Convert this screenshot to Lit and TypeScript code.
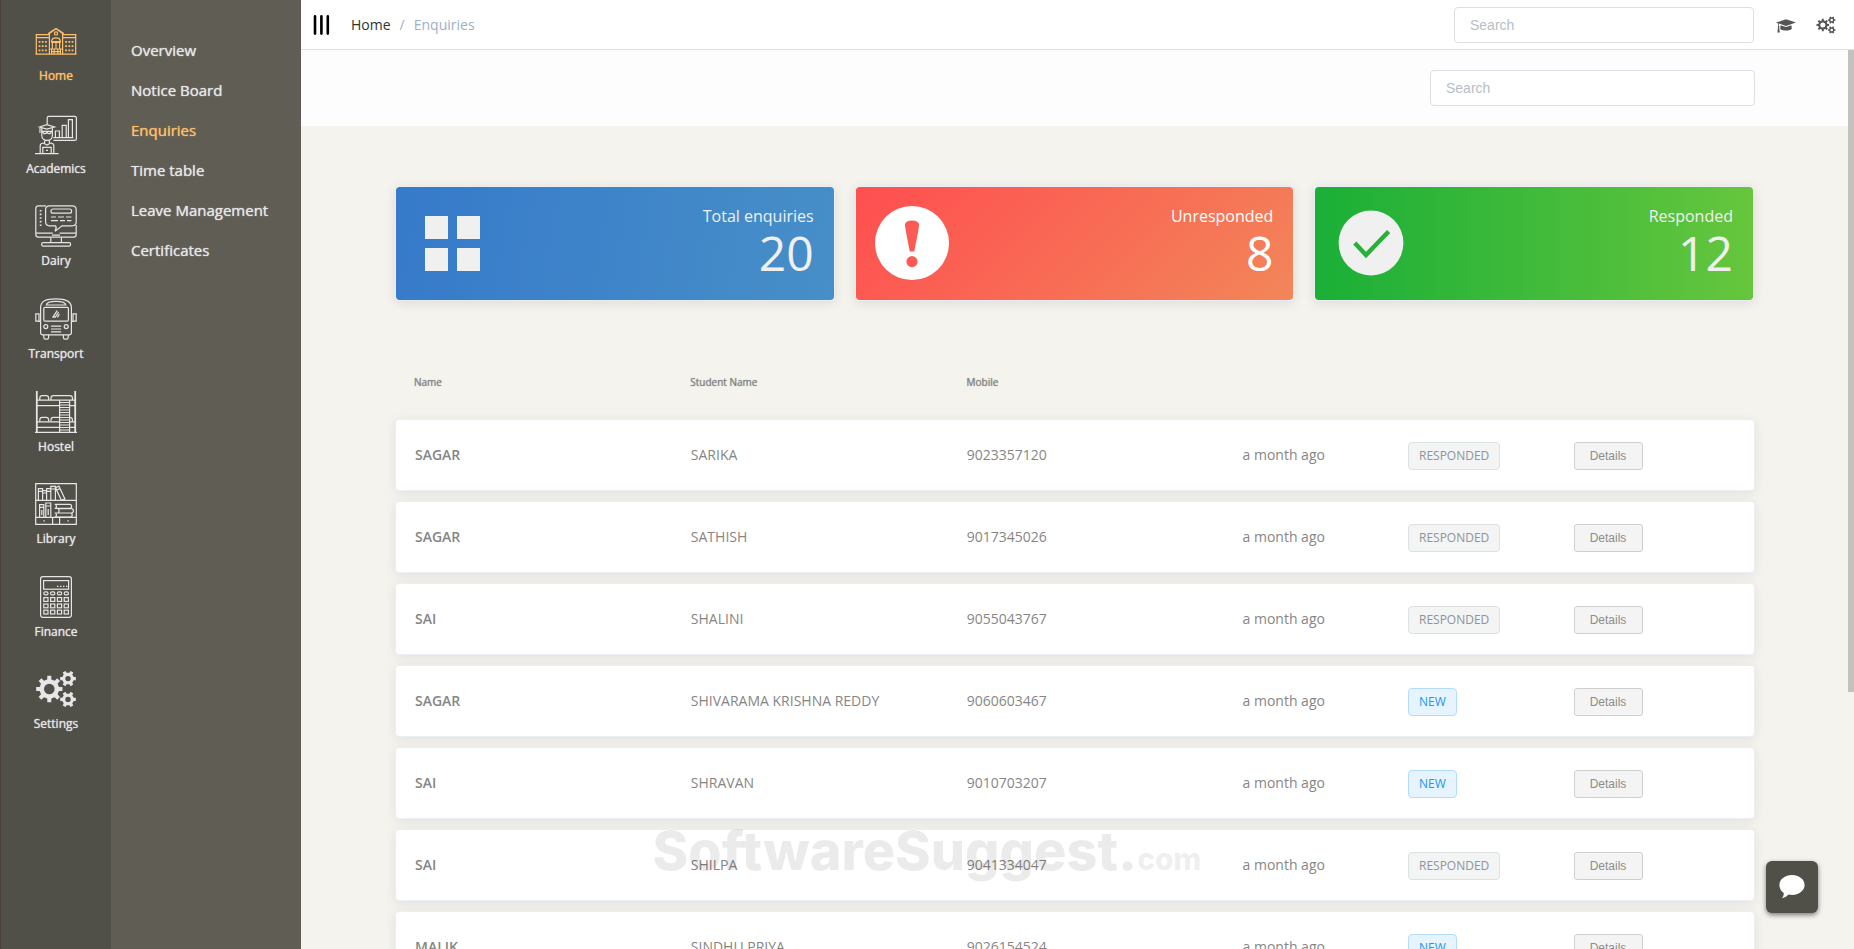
import { LitElement, html, svg, css, SVGTemplateResult } from 'lit';
import { customElement, state } from 'lit/decorators.js';
import { classMap } from 'lit/directives/class-map.js';

interface Enquiry {
  name: string;
  student: string;
  mobile: string;
  when: string;
  responded: boolean;
}

const row = (name: string, student: string, mobile: string, responded: boolean): Enquiry => ({
  name,
  student,
  mobile,
  when: 'a month ago',
  responded,
});

const enquiries: Enquiry[] = [
  row('SAGAR', 'SARIKA', '9023357120', true),
  row('SAGAR', 'SATHISH', '9017345026', true),
  row('SAI', 'SHALINI', '9055043767', true),
  row('SAGAR', 'SHIVARAMA KRISHNA REDDY', '9060603467', false),
  row('SAI', 'SHRAVAN', '9010703207', false),
  row('SAI', 'SHILPA', '9041334047', true),
  row('MALIK', 'SINDHU PRIYA', '9026154524', false),
];

// outline of a cog wheel with a round hole
const gear = (cx: number, cy: number, r: number, teeth: number, hole: number) => {
  const step = (Math.PI * 2) / teeth;
  const inner = r * 0.74;
  const points: string[] = [];
  const add = (radius: number, angle: number) =>
    points.push(
      `${(cx + radius * Math.cos(angle)).toFixed(2)} ${(cy + radius * Math.sin(angle)).toFixed(2)}`
    );
  for (let i = 0; i < teeth; i++) {
    const a = i * step;
    add(inner, a - step * 0.27);
    add(r, a - step * 0.19);
    add(r, a + step * 0.19);
    add(inner, a + step * 0.27);
  }
  return `M${points.join('L')}Z M${cx - hole} ${cy}a${hole} ${hole} 0 1 0 ${hole * 2} 0a${hole} ${hole} 0 1 0 ${-hole * 2} 0Z`;
};

const gearsPath = [
  gear(14.3, 21, 13.3, 8, 5.3),
  gear(33, 10.6, 8, 6, 2.7),
  gear(33, 31.4, 8, 6, 2.7),
].join(' ');

const gears = svg`<path fill="currentColor" stroke="none" fill-rule="evenodd" d=${gearsPath} />`;

const rungs = [11.5, 14, 16.5, 19, 21.5, 24, 26.5, 29, 31.5, 34, 36.5, 39]
  .map((y) => `M25 ${y}h9.5`)
  .join('');

const keys = [8.8, 15.6, 22.4, 29.2];

const icons: Record<string, SVGTemplateResult> = {
  home: svg`
    <path d="M.6 14.6h13.6M27.8 14.6h13.6M1.3 14.6v19.6M40.7 14.6v19.6M1 17.6h13M28 17.6h13M.4 34.2h41.2" />
    <path d="M14.4 34V13.4L21 8.8l6.6 4.6V34M13.2 13.6L21 8.4l7.8 5.2" />
    <circle cx="21" cy="13.4" r="1.6" />
    <path d="M16.6 21.6c0-5 8.8-5 8.8 0zM16.2 22.4h9.6M17.4 22.4v6M21 22.4v6M24.6 22.4v6M14.4 29h13.2M16.6 34v-5M25.4 34v-5M19.2 34v-5M22.8 34v-5M16 31.6h10" />
    <path stroke-width="1.8" stroke-dasharray="1.8 2.4" d="M4.5 21v12M7.7 21v12M10.9 21v12M31.1 21v12M34.3 21v12M37.5 21v12" />`,
  academics: svg`
    <path d="M12.2 11V5q0-1.6 1.6-1.6h26q1.6 0 1.6 1.6v21q0 1.4-1.6 1.4H18.4M18.4 24.6h20" />
    <path d="M20.4 24.6V18h4v6.6M27.2 24.6V12.4h4v12.2M33.4 24.6v-18h4v18" />
    <path d="M4.4 14l7.4-2.4 7.8 2.4-7.8 2.2zM6.8 15v7.6c0 6.4 10.6 6.4 10.6 0V15M5 15v5M6.8 18.4h10.6M8 18.4c0 3 3.4 3 4 .4.6 2.6 4 2.6 4-.4M9.6 27v3.2M14.4 27v3.2" />
    <path d="M5.2 40.4v-7.6q0-2.4 3-2.8l3.8 2 3.8-2q3 .4 3 2.8v7.6M7.8 40.4v-6h8.4v6M0 40.6h23.6M11 37.4h2" />`,
  dairy: svg`
    <path d="M11 .8H3.4Q.8.8.8 3.4v26.2q0 2.6 2.6 2.6h35.2q2.6 0 2.6-2.6V20M.8 28.2h17M24.6 28.2h16.6" />
    <path d="M14.6.8h22.6q4 0 4 4v12q0 4-4 4H27l-7 5.6q2-3 .6-5.6h-6q-4 0-4-4v-12q0-4 4-4z" />
    <rect x="16" y="4" width="20.6" height="4.2" rx="2" />
    <path d="M16 12h5M23 12h6M31 12h5.4M16 15.6h7M25 15.6h5M32 15.6h4.4M17 30.2h8" />
    <path stroke-width="1.8" stroke-dasharray="1.6 2" d="M5.6 5v17" />
    <path d="M15.8 32.4v5.2M26.4 32.4v5.2" />
    <rect x="6.6" y="37.6" width="29" height="3.6" rx="1.6" />`,
  transport: svg`
    <path d="M5.6 34.6V9.4C5.6 3 11 .8 21 .8s15.4 2.2 15.4 8.6v25.2q0 2.2-2.2 2.2H7.8q-2.2 0-2.2-2.2z" />
    <path d="M11.4 7q.4-3.6 9.6-3.6T30.8 7z" />
    <rect x="8.8" y="9.4" width="24.6" height="13.8" rx="1.2" />
    <circle cx="10.8" cy="28.6" r="2" /><circle cx="31.2" cy="28.6" r="2" />
    <path d="M16 28.2h10.2M16 31h10.2M16 33.8h10.2M17.6 19.6l4.6-7M20 19.6l3.6-5.6M22.4 19.4l2-3.4M17.8 19.2h3" />
    <path d="M5.4 23.4H4v-7.6H.8v7.4H4M36.6 23.4H38v-7.6h3.2v7.4H38M8.8 37v2.6q0 1.6 1.6 1.6h1.6q1.6 0 1.6-1.6V37M28.4 37v2.6q0 1.6 1.6 1.6h1.6q1.6 0 1.6-1.6V37" />`,
  hostel: svg`
    <path stroke-width="1.8" d="M1.8 0v41M40.2 0v41" />
    <path d="M0 41.3h42M2 9.2h38M2 14.6h22.6M34.6 14.6H40M2 30.8h22.6M34.6 30.8H40M2 36.4h22.6M34.6 36.4H40" />
    <path d="M4.8 9V7q0-2.4 2.4-2.4h4q2.4 0 2.4 2.4v2M16 9V7q0-2.4 2.4-2.4H35q2.4 0 2.4 2.4v2M4.8 30.6v-1.8q0-2.4 2.4-2.4h4q2.4 0 2.4 2.4v1.8M16 30.6v-1.8q0-2.4 2.4-2.4h6M34.6 26.4q2.8 0 2.8 2.4v1.8" />
    <path d="M24.6 9.2V41M34.6 9.2V41${rungs}" />`,
  library: svg`
    <path d="M.7.7h40.6v40.6H.7zM.7 17.3h40.6M.7 34.4h40.6M17.6 34.4v7M24.6 34.4v7M8.4 37.8h1.4M32.4 37.8h1.4" />
    <path d="M3.4 17V5.6h4.2V17M7.6 7.6h4V17M11.6 17V5.6h4.2V17M3.4 8.4h4.2M11.6 8.4h4.2M7.6 10h4M15.8 17V3.4h4.6V17M15.8 6h4.6M20.4 4.6l3.6-1.4 6 13-3.6 1zM21.6 7l3.6-1.4" />
    <path d="M4.6 34V21.6h4.2V34M8.8 34v-9M10.8 34V20h5v14M4.6 24.4h4.2M10.8 23h5M6.8 27v5M13.2 26v6" />
    <path d="M19.6 21.4h15q2 0 2 2t-2 2h-15M22.6 25.6h13.8q2 0 2 2.2t-2 2.2H22.6M19.6 30h15.6q2 0 2 2t-2 2H19.6M20.6 21.4q1.6 2 0 4M23.4 25.8q1.4 2 0 4M20.6 30q1.6 2 0 4" />`,
  finance: svg`
    <rect x="5.6" y=".7" width="30.8" height="40.6" rx="2.2" />
    <rect x="8.6" y="4.6" width="25" height="8.6" />
    <path stroke-dasharray="1.4 1.6" d="M22 10.4h11" />
    ${keys.map(
      (x) => svg`
        <rect x=${x} y="15.8" width="4.2" height="3" rx="1.4" />
        <rect x=${x} y="21.6" width="4.2" height="3.8" />
        <rect x=${x} y="28" width="4.2" height="3.8" />
        <rect x=${x} y="34.2" width="4.2" height="3.8" />`
    )}`,
  settings: gears,
};

const sections = [
  'Home',
  'Academics',
  'Dairy',
  'Transport',
  'Hostel',
  'Library',
  'Finance',
  'Settings',
];

const pages = [
  'Overview',
  'Notice Board',
  'Enquiries',
  'Time table',
  'Leave Management',
  'Certificates',
];

@customElement('stat-card')
export class StatCard extends LitElement {
  static override properties = {
    kind: { type: String, reflect: true },
    label: { type: String },
    value: { type: Number },
  };
  static override styles = css`
    :host {
      display: flex;
      justify-content: space-between;
      align-items: center;
      box-sizing: border-box;
      height: 115px;
      padding: 0 20px 1px 19px;
      border: 1px solid #ebeef5;
      border-radius: 4px;
      background-clip: padding-box;
      box-shadow: 0 2px 12px rgba(0, 0, 0, 0.1);
      color: #f0f0f0;
    }
    :host([kind='total']) {
      background-image: linear-gradient(100deg, #367aca, #478fc8);
    }
    :host([kind='pending']) {
      background-image: linear-gradient(135deg, #ff4e50, #f28659);
      color: #ffffff;
    }
    :host([kind='done']) {
      background-image: linear-gradient(90deg, #1aaf37, #66c63d);
    }
    .icon {
      width: 74px;
      height: 74px;
    }
    .text {
      display: flex;
      flex-direction: column;
      padding-bottom: 3px;
      text-align: right;
    }
    .label {
      font-size: 16px;
      line-height: 22px;
    }
    .value {
      font-size: 48px;
      line-height: 52px;
    }
  `;
  declare kind: string;
  declare label: string;
  declare value: number;

  shape() {
    if (this.kind === 'total') {
      return svg`<path fill="currentColor" d="M10 10h23v23H10zM42 10h23v23H42zM10 42h23v23H10zM42 42h23v23H42z" />`;
    }
    if (this.kind === 'pending') {
      return svg`
        <circle cx="37" cy="37" r="37" fill="currentColor" />
        <path fill="#fb5b53" d="M30 19q0-4.6 7-4.6t7 4.6q0 3-4.8 26.6h-4.4Q30 22 30 19z" />
        <circle cx="37" cy="55.6" r="5.6" fill="#fb5b53" />`;
    }
    return svg`
      <circle cx="37" cy="37" r="32.4" fill="currentColor" />
      <path fill="none" stroke="#26b238" stroke-width="4.4" d="M20.8 37l11.2 12L54.6 25.4" />`;
  }

  override render() {
    return html`
      <svg class="icon" viewBox="0 0 74 74" aria-hidden="true">${this.shape()}</svg>
      <div class="text">
        <span class="label">${this.label}</span>
        <span class="value">${this.value}</span>
      </div>
    `;
  }
}

@customElement('enquiry-table')
export class EnquiryTable extends LitElement {
  static override styles = css`
    :host,
    table,
    thead,
    tbody {
      display: block;
    }
    tr {
      display: grid;
      grid-template-columns: 5fr 5fr 5fr 3fr 3fr 3fr;
      align-items: center;
      box-sizing: border-box;
      padding: 0 15px 0 19px;
    }
    thead tr {
      height: 38px;
    }
    tbody {
      padding-top: 18px;
    }
    tbody tr {
      height: 72px;
      margin-bottom: 10px;
      border: 1px solid #ebeef5;
      border-radius: 4px;
      background: #ffffff;
      box-shadow: 0 2px 12px rgba(0, 0, 0, 0.08);
    }
    th,
    td {
      padding: 0;
      text-align: left;
      font-size: 14px;
      font-weight: 400;
      line-height: 20px;
      color: #868686;
    }
    thead th {
      font-size: 10px;
      text-shadow: 0 0 1px currentColor;
    }
    tbody th {
      font-weight: 600;
    }
    .tag {
      display: inline-block;
      box-sizing: border-box;
      height: 28px;
      margin-top: 2px;
      padding: 0 10px;
      border: 1px solid #dee1e1;
      border-radius: 4px;
      background: #f3f4f4;
      font-size: 12px;
      line-height: 26px;
      vertical-align: middle;
      color: #909399;
    }
    .tag.new {
      border-color: #b3dcff;
      background: #e6f4ff;
      color: #2196f3;
    }
    button {
      min-width: 69px;
      height: 28px;
      margin: 2px 0 0;
      padding: 0 15px;
      border: 1px solid #cfcfcf;
      border-radius: 3px;
      background: #f4f4f4;
      font-family: 'Liberation Sans', Arial, sans-serif;
      font-size: 12px;
      vertical-align: middle;
      color: #8c8c8c;
      cursor: pointer;
    }
  `;

  override render() {
    return html`
      <table>
        <thead>
          <tr>
            <th scope="col">Name</th>
            <th scope="col">Student Name</th>
            <th scope="col">Mobile</th>
          </tr>
        </thead>
        <tbody>
          ${enquiries.map(
            (e) => html`
              <tr>
                <th scope="row">${e.name}</th>
                <td>${e.student}</td>
                <td>${e.mobile}</td>
                <td>${e.when}</td>
                <td>
                  <span class=${classMap({ tag: true, new: !e.responded })}
                    >${e.responded ? 'RESPONDED' : 'NEW'}</span
                  >
                </td>
                <td><button type="button">Details</button></td>
              </tr>
            `
          )}
        </tbody>
      </table>
    `;
  }
}

@customElement('app-root')
export class AppRoot extends LitElement {
  static override styles = css`
    :host {
      display: flex;
      height: 100vh;
      overflow: hidden;
      background: #f4f3ee;
      font-family: 'Open Sans', 'Noto Sans', sans-serif;
    }
    a {
      color: inherit;
      text-decoration: none;
    }
    .rail {
      flex: none;
      box-sizing: border-box;
      width: 111px;
      padding-top: 20px;
      border-left: 1px solid #4b3f3e;
      background: #504f48;
      color: #e6e6e6;
    }
    .sections {
      display: grid;
      grid-template-rows: repeat(8, 1fr);
      height: 741px;
    }
    .rail a {
      display: flex;
      flex-direction: column;
      align-items: center;
      font-size: 12px;
      line-height: 28px;
      text-shadow: 0 0 1px currentColor;
    }
    .rail svg {
      width: 42px;
      height: 42px;
      fill: none;
      stroke: currentColor;
      stroke-width: 1.2;
    }
    .subnav {
      display: flex;
      flex-direction: column;
      flex: none;
      box-sizing: border-box;
      width: 190px;
      padding: 30px 0 0 20px;
      background: #605d55;
      font-size: 15px;
      line-height: 40px;
      color: #e6e6e6;
    }
    .subnav a {
      text-shadow: 0 0 1px currentColor;
    }
    .rail .active,
    .subnav .active {
      color: #ffc069;
    }
    .main {
      display: flex;
      flex-direction: column;
      flex: 1;
      min-width: 0;
    }
    .topbar {
      display: flex;
      align-items: center;
      flex: none;
      height: 49px;
      padding: 0 18px 0 12px;
      border-bottom: 1px solid #e3e3e3;
      background: #ffffff;
    }
    .topbar button {
      display: flex;
      padding: 0;
      border: 0;
      background: none;
      color: #555555;
      cursor: pointer;
    }
    .crumbs {
      display: flex;
      gap: 9px;
      margin: 0 auto 0 21px;
      font-size: 14px;
      line-height: 20px;
      color: #9bb1c5;
    }
    .crumbs a {
      color: #303133;
    }
    input {
      box-sizing: border-box;
      height: 36px;
      padding: 0 15px;
      border: 1px solid #dcdfe6;
      border-radius: 4px;
      outline: none;
      background: #ffffff;
      font-family: 'Liberation Sans', Arial, sans-serif;
      font-size: 14px;
      color: #606266;
    }
    input::placeholder {
      color: #b8bec6;
    }
    .topbar input {
      width: 300px;
    }
    .tools {
      display: flex;
      gap: 20px;
      margin-left: 22px;
    }
    .scroller {
      display: grid;
      grid-template-columns: 1fr 6px;
      flex: 1;
      min-height: 0;
    }
    .content {
      min-width: 0;
      overflow: hidden;
    }
    .filter {
      display: flex;
      justify-content: flex-end;
      align-items: center;
      height: 76px;
      padding-right: 93px;
      background: #fdfdfe;
    }
    .filter input {
      width: 325px;
    }
    .body {
      padding: 60px 93px 0 94px;
    }
    .cards {
      display: grid;
      grid-template-columns: repeat(3, 1fr);
      gap: 20px;
      margin: 0 1px 62px 0;
    }
    .track {
      display: grid;
      grid-template-rows: 5fr 2fr;
    }
    .thumb {
      background: #c3c2be;
    }
    .watermark {
      position: absolute;
      right: 0;
      bottom: 60px;
      left: 0;
      text-align: center;
      font-family: Inter, sans-serif;
      font-size: 54px;
      font-weight: 800;
      line-height: 60px;
      color: rgba(0, 0, 0, 0.08);
      pointer-events: none;
    }
    .watermark small {
      font-size: 30px;
    }
    .chat {
      display: flex;
      justify-content: center;
      align-items: center;
      position: absolute;
      right: 36px;
      bottom: 36px;
      width: 52px;
      height: 52px;
      padding: 0;
      border: 0;
      border-radius: 6px;
      background: #504f48;
      box-shadow: 0 2px 5px rgba(0, 0, 0, 0.5);
      cursor: pointer;
    }
  `;

  @state() section = 'Home';
  @state() page = 'Enquiries';

  pickSection(e: Event, name: string) {
    e.preventDefault();
    this.section = name;
  }
  pickPage(e: Event, name: string) {
    e.preventDefault();
    this.page = name;
  }

  override render() {
    return html`
      <nav class="rail" aria-label="Sections">
        <div class="sections">
          ${sections.map(
            (name) => html`
              <a
                href="#"
                class=${classMap({ active: name === this.section })}
                @click=${(e: Event) => this.pickSection(e, name)}
              >
                <svg viewBox="0 0 42 42" aria-hidden="true">${icons[name.toLowerCase()]}</svg>
                ${name}
              </a>
            `
          )}
        </div>
      </nav>
      <nav class="subnav" aria-label="Pages">
        ${pages.map(
          (name) => html`
            <a
              href="#"
              class=${classMap({ active: name === this.page })}
              @click=${(e: Event) => this.pickPage(e, name)}
              >${name}</a
            >
          `
        )}
      </nav>
      <div class="main">
        <header class="topbar">
          <button type="button" aria-label="Toggle menu">
            <svg width="17" height="20" viewBox="0 0 17 20">
              <path
                fill="none"
                stroke="#000000"
                stroke-width="2.6"
                stroke-linecap="round"
                d="M2 1.4v17.2M8.4 1.4v17.2M14.8 1.4v17.2"
              />
            </svg>
          </button>
          <nav class="crumbs" aria-label="Breadcrumb">
            <a href="#">Home</a><span>/</span><span>${this.page}</span>
          </nav>
          <input type="text" placeholder="Search" aria-label="Search" />
          <div class="tools">
            <button type="button" aria-label="Academic year">
              <svg width="20" height="20" viewBox="0 0 20 20" fill="currentColor">
                <path d="M0 7.6L10 4.2l10 3.4-10 3.4-7-2.4v2.6q.8.6.2 1.4L3.8 17.6H1.4L2 12.6q-.6-.8.2-1.4V8.4z" />
                <path d="M4.6 10.2L10 12l5.4-1.8.4 3.2c-.6 2.8-11 2.8-11.6 0z" />
              </svg>
            </button>
            <button type="button" aria-label="Settings">
              <svg width="20" height="20" viewBox="0 0 42 42">${gears}</svg>
            </button>
          </div>
        </header>
        <div class="scroller">
          <main class="content">
            <div class="filter">
              <input type="text" placeholder="Search" aria-label="Search enquiries" />
            </div>
            <div class="body">
              <div class="cards">
                <stat-card kind="total" label="Total enquiries" .value=${20}></stat-card>
                <stat-card kind="pending" label="Unresponded" .value=${8}></stat-card>
                <stat-card kind="done" label="Responded" .value=${12}></stat-card>
              </div>
              <enquiry-table></enquiry-table>
            </div>
          </main>
          <div class="track"><div class="thumb"></div></div>
        </div>
      </div>
      <div class="watermark">SoftwareSuggest.<small>com</small></div>
      <button class="chat" type="button" aria-label="Open chat">
        <svg width="26" height="24" viewBox="0 0 26 24">
          <path
            fill="#ffffff"
            d="M13 0c7 0 12.6 4.4 12.6 10S20 20 13 20q-1.8 0-3.4-.4Q6.6 23 3 23.2q2-2.2 1.8-5.2C2 16.2.4 13.2.4 10 .4 4.4 6 0 13 0z"
          />
        </svg>
      </button>
    `;
  }
}

declare global {
  interface HTMLElementTagNameMap {
    'stat-card': StatCard;
    'enquiry-table': EnquiryTable;
    'app-root': AppRoot;
  }
}
